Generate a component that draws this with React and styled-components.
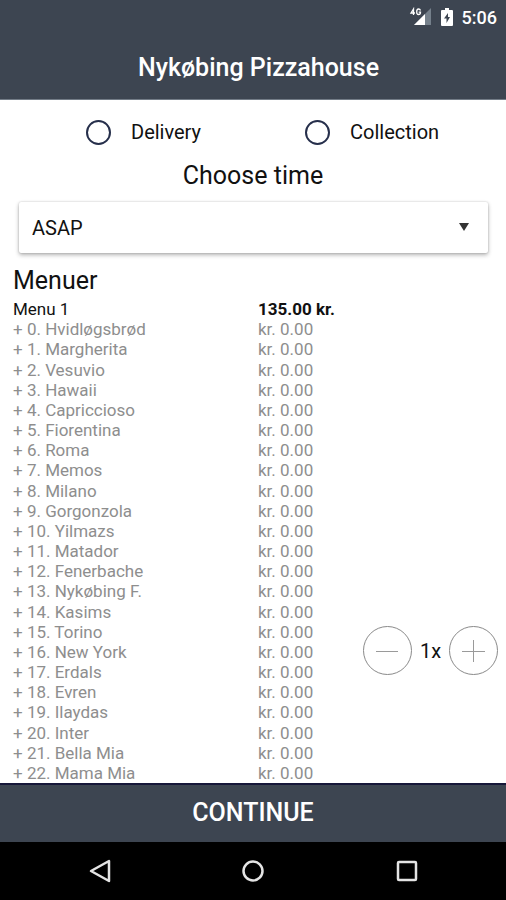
import React, {useState} from 'react';
import styled, {createGlobalStyle} from 'styled-components';

const pizzas = [
  'Hvidløgsbrød', 'Margherita', 'Vesuvio', 'Hawaii', 'Capriccioso', 'Fiorentina',
  'Roma', 'Memos', 'Milano', 'Gorgonzola', 'Yilmazs', 'Matador', 'Fenerbache',
  'Nykøbing F.', 'Kasims', 'Torino', 'New York', 'Erdals', 'Evren', 'Ilaydas',
  'Inter', 'Bella Mia', 'Mama Mia',
];

function StatusBar(){
  return(
    <Status>
      <svg width="23" height="20" viewBox="0 0 23 20" aria-hidden="true">
        <path d="M22 1V18H5Z" fill="#75808b"/>
        <path d="M16 7V18H5Z" fill="#fff"/>
        <path d="M4.500 8V2L2 6H6M11.500 3.500Q11 2 9.500 2Q7.700 2 7.700 5Q7.700 7.500 9.500 7.500Q11.500 7.500 11.500 5.200H9.700" fill="none" stroke="#fff" strokeWidth="1.300"/>
      </svg>
      <svg width="12" height="19" viewBox="0 0 12 19" aria-hidden="true">
        <path d="M4 0H8V2H11Q12 2 12 3V17Q12 18 11 18H1Q0 18 0 17V3Q0 2 1 2H4Z" fill="#fff"/>
        <path d="M7 5L3 10.500H5.500V15L9 9H7Z" fill="#3d4551"/>
      </svg>
      <Clock>5:06</Clock>
    </Status>
  );
}

function Stepper({count, onChange}){
  return(
    <StepperRow>
      <RoundButton type="button" aria-label="Remove one" onClick={() => onChange(Math.max(0, count - 1))}>
        <svg width="23" height="23" viewBox="0 0 23 23"><path d="M0 12.500H22"/></svg>
      </RoundButton>
      <Count>{count}x</Count>
      <RoundButton type="button" aria-label="Add one" onClick={() => onChange(count + 1)}>
        <svg width="23" height="23" viewBox="0 0 23 23"><path d="M0 12.500H23M11.500 1V23"/></svg>
      </RoundButton>
    </StepperRow>
  );
}

function App(){

  const [method, setMethod] = useState('')
  const [count, setCount] = useState(1)

  return(
    <>
      <GlobalStyle/>
      <Page>
        <Header>
          <StatusBar/>
          <Title>Nykøbing Pizzahouse</Title>
        </Header>

        <Main>
          <Methods>
            {['Delivery', 'Collection'].map((name) =>
              <Method key={name}>
                <Radio type="radio" name="method" value={name} checked={method === name} onChange={() => setMethod(name)}/>
                {name}
              </Method>
            )}
          </Methods>

          <TimeLabel htmlFor="time">Choose time</TimeLabel>
          <SelectBox>
            <Select id="time">
              <option>ASAP</option>
            </Select>
            <Arrow width="12" height="8" viewBox="0 0 12 8" aria-hidden="true">
              <path d="M1 0H11L6 8Z" fill="#333"/>
            </Arrow>
          </SelectBox>

          <MenuTitle>Menuer</MenuTitle>
          <MenuItem>
            <Lines>
              <Line $main>
                <span>Menu 1</span>
                <Price $main>135.00 kr.</Price>
              </Line>
              {pizzas.map((pizza, i) =>
                <Line key={pizza}>
                  <span>+ {i}. {pizza}</span>
                  <Price>kr. 0.00</Price>
                </Line>
              )}
            </Lines>
            <Stepper count={count} onChange={setCount}/>
          </MenuItem>
        </Main>

        <Continue type="button">CONTINUE</Continue>

        <NavBar>
          <NavButton type="button" aria-label="Back">
            <svg width="24" height="24" viewBox="0 0 24 24"><path d="M21 2V22L3 12Z"/></svg>
          </NavButton>
          <NavButton type="button" aria-label="Home">
            <svg width="24" height="24" viewBox="0 0 24 24"><circle cx="12" cy="12" r="9.500"/></svg>
          </NavButton>
          <NavButton type="button" aria-label="Recent apps">
            <svg width="24" height="24" viewBox="0 0 24 24"><rect x="3" y="3" width="18" height="18" rx="1"/></svg>
          </NavButton>
        </NavBar>
      </Page>
    </>
  );
}

export default App;

const GlobalStyle = createGlobalStyle`
  * {
    box-sizing: border-box;
  }
  body {
    margin: 0;
    background: #fff;
    color: #111;
    font-family: Roboto, sans-serif;
    font-size: 17px;
  }
  button, select {
    font-family: inherit;
  }
`;

const Page = styled.div`
  display: flex;
  flex-direction: column;
  min-height: 100vh;
`;

const Header = styled.header`
  background: #3d4551;
  color: #fff;
  border-bottom: 1px solid #737c87;
`;

const Status = styled.div`
  display: flex;
  align-items: center;
  justify-content: flex-end;
  gap: 9px;
  height: 34px;
  padding-right: 9px;
`;

const Clock = styled.span`
  font-size: 18px;
  font-weight: 500;
`;

const Title = styled.h1`
  margin: 0;
  padding: 2px 0 0 11px;
  font-size: 25px;
  font-weight: 500;
  line-height: 63px;
  text-align: center;
`;

const Main = styled.main`
  display: flex;
  flex-direction: column;
  flex: 1;
`;

const Methods = styled.div`
  display: grid;
  grid-template-columns: 1fr 1fr;
  gap: 18px;
  padding: 20px 0 0 86px;
`;

const Method = styled.label`
  display: flex;
  align-items: center;
  gap: 20px;
  font-size: 20px;
  line-height: 25px;
`;

const Radio = styled.input`
  appearance: none;
  width: 25px;
  height: 25px;
  margin: 0;
  border: 2px solid #262f4b;
  border-radius: 50%;

  &:checked {
    background: radial-gradient(#262f4b 45%, #fff 50%);
  }
`;

const TimeLabel = styled.label`
  padding: 16px 0 11px;
  font-size: 25px;
  line-height: 30px;
  text-align: center;
`;

const SelectBox = styled.div`
  position: relative;
  margin: 0 18px 0 19px;
`;

const Select = styled.select`
  appearance: none;
  display: block;
  width: 100%;
  height: 51px;
  padding: 0 13px;
  border: 0;
  border-radius: 2px;
  background: #fff;
  box-shadow: 0 2px 4px rgba(0, 0, 0, 0.3), 0 0 2px rgba(0, 0, 0, 0.2);
  color: #111;
  font-size: 20px;
`;

const Arrow = styled.svg`
  position: absolute;
  top: 21px;
  right: 18px;
  pointer-events: none;
`;

const MenuTitle = styled.h2`
  margin: 0;
  padding: 13px 13px 3px;
  font-size: 25px;
  font-weight: 400;
  line-height: 30px;
`;

const MenuItem = styled.section`
  display: flex;
  flex: 1;
  padding: 0 8px 0 13px;
`;

const Lines = styled.div`
  display: grid;
  flex: 1;
  grid-auto-rows: minmax(20px, 1fr);
`;

const Line = styled.div`
  display: grid;
  grid-template-columns: 245px 1fr;
  align-items: center;
  line-height: 20px;
  color: ${({$main}) => $main ? '#111' : '#8e8e8e'};
`;

const Price = styled.span`
  font-weight: ${({$main}) => $main ? 700 : 400};
`;

const StepperRow = styled.div`
  display: flex;
  align-items: center;
  align-self: flex-end;
  padding-bottom: 108px;
`;

const RoundButton = styled.button`
  display: flex;
  align-items: center;
  justify-content: center;
  width: 49px;
  height: 49px;
  padding: 0;
  border: 1px solid #8a8a8a;
  border-radius: 50%;
  background: none;

  path {
    stroke: #9a9a9a;
  }
`;

const Count = styled.span`
  width: 37px;
  font-size: 20px;
  text-align: center;
`;

const Continue = styled.button`
  height: 59px;
  padding: 0 0 3px;
  border: 0;
  border-top: 2px solid #17183a;
  background: #3d4551;
  color: #fff;
  font-size: 25px;
  font-weight: 500;
`;

const NavBar = styled.nav`
  display: flex;
  justify-content: space-around;
  align-items: center;
  height: 58px;
  padding: 0 22px 0 23px;
  background: #000;
`;

const NavButton = styled.button`
  display: flex;
  padding: 0;
  border: 0;
  background: none;

  svg {
    fill: none;
    stroke: #e4e4e4;
    stroke-width: 2.5;
    stroke-linejoin: round;
  }
`;
